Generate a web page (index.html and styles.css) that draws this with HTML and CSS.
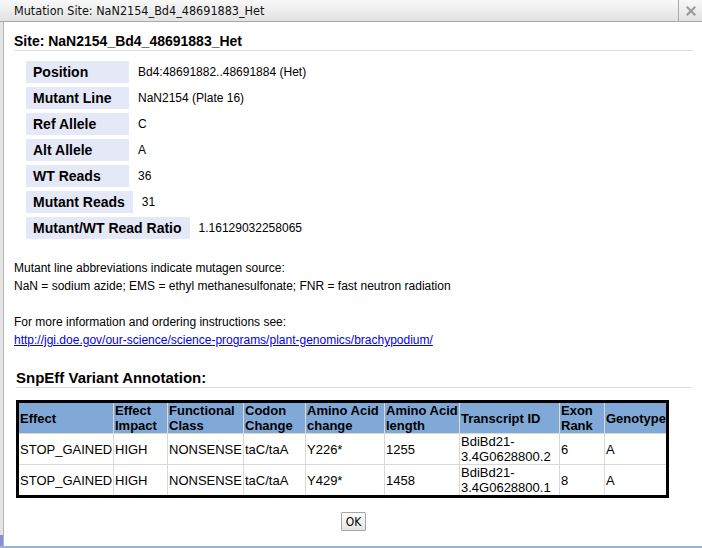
FILE: index.html
```html
<!DOCTYPE html>
<html>
<head>
<meta charset="utf-8">
<title>Mutation Site</title>
<link rel="stylesheet" href="styles.css">
</head>
<body>
<div class="window">
  <div class="titlebar">
    <div class="title">Mutation Site: NaN2154_Bd4_48691883_Het</div>
    <div class="close">
      <svg width="10" height="10" viewBox="0 0 10 10"><path d="M1.5 1.5 L8.5 8.5 M8.5 1.5 L1.5 8.5" stroke="#9c9c9c" stroke-width="2.2" stroke-linecap="square" fill="none"/></svg>
    </div>
  </div>
  <div class="main">
    <div class="strip"></div>
    <div class="content">
      <h2 class="site-heading">Site: NaN2154_Bd4_48691883_Het</h2>
      <div class="kv">
        <div class="kv-row"><div class="kv-label">Position</div><div class="kv-value">Bd4:48691882..48691884 (Het)</div></div>
        <div class="kv-row"><div class="kv-label">Mutant Line</div><div class="kv-value">NaN2154 (Plate 16)</div></div>
        <div class="kv-row"><div class="kv-label">Ref Allele</div><div class="kv-value">C</div></div>
        <div class="kv-row"><div class="kv-label">Alt Allele</div><div class="kv-value">A</div></div>
        <div class="kv-row"><div class="kv-label">WT Reads</div><div class="kv-value">36</div></div>
        <div class="kv-row"><div class="kv-label">Mutant Reads</div><div class="kv-value">31</div></div>
        <div class="kv-row"><div class="kv-label">Mutant/WT Read Ratio</div><div class="kv-value">1.16129032258065</div></div>
      </div>
      <div class="notes">
        <p>Mutant line abbreviations indicate mutagen source:<br>NaN = sodium azide; EMS = ethyl methanesulfonate; FNR = fast neutron radiation</p>
        <p>For more information and ordering instructions see:<br><a href="#">http://jgi.doe.gov/our-science/science-programs/plant-genomics/brachypodium/</a></p>
      </div>
      <h3 class="snp-heading">SnpEff Variant Annotation:</h3>
      <table class="effects">
        <thead>
          <tr>
            <th class="c1">Effect</th>
            <th class="c2">Effect Impact</th>
            <th class="c3">Functional Class</th>
            <th class="c4">Codon Change</th>
            <th class="c5">Amino Acid change</th>
            <th class="c6">Amino Acid length</th>
            <th class="c7">Transcript ID</th>
            <th class="c8">Exon Rank</th>
            <th class="c9">Genotype</th>
          </tr>
        </thead>
        <tbody>
          <tr>
            <td>STOP_GAINED</td><td>HIGH</td><td>NONSENSE</td><td>taC/taA</td><td>Y226*</td><td>1255</td><td>BdiBd21-3.4G0628800.2</td><td>6</td><td>A</td>
          </tr>
          <tr>
            <td>STOP_GAINED</td><td>HIGH</td><td>NONSENSE</td><td>taC/taA</td><td>Y429*</td><td>1458</td><td>BdiBd21-3.4G0628800.1</td><td>8</td><td>A</td>
          </tr>
        </tbody>
      </table>
      <div class="actions"><button class="ok" type="button">OK</button></div>
    </div>
  </div>
</div>
</body>
</html>
```

FILE: styles.css
```css
html, body {
  margin: 0;
  padding: 0;
}
body {
  width: 702px;
  height: 548px;
  overflow: hidden;
  background: #fff;
  color: #000;
  font-family: "Liberation Sans", Arial, sans-serif;
}
.window {
  height: 548px;
  box-sizing: border-box;
  display: flex;
  flex-direction: column;
  border-bottom: 2px solid #98b4d4;
}
.titlebar {
  height: 21px;
  flex: none;
  display: flex;
  align-items: center;
  border-bottom: 1px solid #a8a8a8;
  background: linear-gradient(#f8f8f8, #e2e2e2);
}
.title {
  flex: 1;
  padding-left: 14px;
  font-family: "Liberation Sans Narrow", "DejaVu Sans Condensed", sans-serif;
  font-size: 12.5px;
  color: #111;
}
.close {
  width: 23px;
  height: 21px;
  border-left: 1px solid #a8a8a8;
  display: flex;
  align-items: center;
  justify-content: center;
}
.main {
  flex: 1;
  display: flex;
}
.strip {
  width: 3px;
  background: linear-gradient(to bottom, #e4e4e4 calc(100% - 11px), #8c8cdc calc(100% - 11px));
}
.content {
  flex: 1;
  border-left: 1px solid #b3b3b3;
  padding: 0 9px 0 10px;
}
.site-heading {
  margin: 11px 0 0;
  padding-bottom: 1px;
  font-size: 14px;
  line-height: 16px;
  font-weight: bold;
  border-bottom: 1px solid #dcdcdc;
}
.kv {
  margin: 10px 0 0 12px;
  display: flex;
  flex-direction: column;
  gap: 4px;
}
.kv-row {
  display: flex;
  align-items: center;
  height: 22px;
}
.kv-label {
  box-sizing: border-box;
  min-width: 103px;
  height: 22px;
  line-height: 22px;
  padding: 0 8px 0 7px;
  background: #e5e8f7;
  font-size: 14px;
  font-weight: bold;
}
.kv-value {
  margin-left: 9px;
  font-size: 12px;
}
.notes {
  margin-top: 20px;
  font-size: 12px;
  line-height: 18px;
}
.notes p {
  margin: 0;
}
.notes p + p {
  margin-top: 18px;
}
.notes a {
  color: #0000ee;
}
.snp-heading {
  margin: 20px 1px 0 2px;
  font-size: 15px;
  line-height: 18px;
  font-weight: bold;
  border-bottom: 1px solid #dcdcdc;
}
.effects {
  margin: 12px 0 0 2px;
  width: 653px;
  table-layout: fixed;
  border: 3px solid #000;
  border-spacing: 0;
  font-size: 13px;
}
.effects th,
.effects td {
  box-sizing: border-box;
  padding: 0 1px;
  line-height: 15px;
  text-align: left;
  vertical-align: middle;
  border-left: 1px solid #d9d9d9;
  border-top: 1px solid #d9d9d9;
}
.effects th {
  background: #80a9d8;
  font-weight: bold;
  border-top: 0;
}
.effects tr > :first-child {
  border-left: 0;
}
.c1 { width: 94px; }
.c2 { width: 54px; }
.c3 { width: 76px; }
.c4 { width: 62px; }
.c5 { width: 79px; }
.c6 { width: 75px; }
.c7 { width: 100px; }
.c8 { width: 45px; }
.c9 { width: 62px; }
.actions {
  margin-top: 14px;
  display: flex;
  justify-content: center;
}
.ok {
  width: 25px;
  height: 19px;
  padding: 0;
  border: 1px solid #a6a6a6;
  border-radius: 1px;
  background: linear-gradient(#fefefe, #e4e4e4);
  font-family: "Liberation Sans Narrow", "DejaVu Sans Condensed", sans-serif;
  font-size: 12px;
  color: #000;
}
```
